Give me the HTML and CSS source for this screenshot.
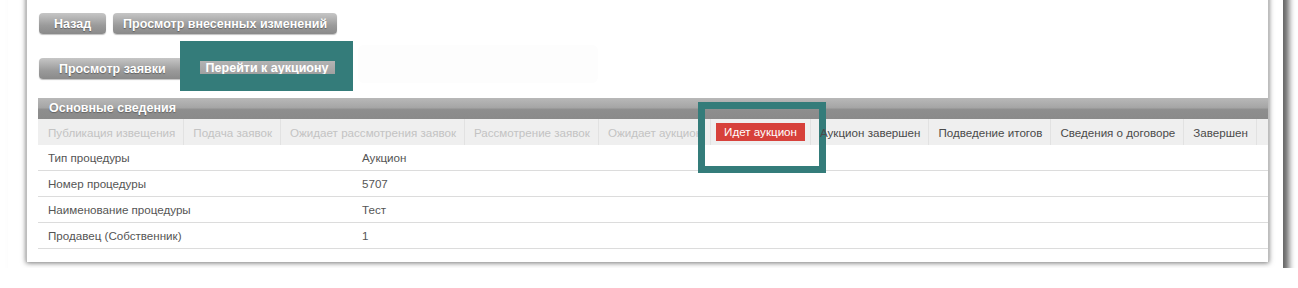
FILE: index.html
```html
<!DOCTYPE html>
<html lang="ru">
<head>
  <meta charset="UTF-8" />
  <title>Просмотр заявки</title>
  <link rel="stylesheet" href="styles.css">
</head>
<body>
  <div class="frame">
    <div class="panel">
      <div class="btn-row">
        <a class="btn btn-back">Назад</a>
        <a class="btn">Просмотр внесенных изменений</a>
      </div>

      <div class="tab-row">
        <a class="btn btn-tab">Просмотр заявки</a>
        <div class="mark-tab">
          <span class="mark-label">Перейти к аукциону</span>
        </div>
        <div class="ghost-box"></div>
      </div>

      <div class="section">
        <div class="section-title">Основные сведения</div>

        <div class="stages">
          <span class="stage done">Публикация извещения</span>
          <span class="stage done">Подача заявок</span>
          <span class="stage done">Ожидает рассмотрения заявок</span>
          <span class="stage done">Рассмотрение заявок</span>
          <span class="stage done">Ожидает аукцион</span>
          <span class="stage current">
            <span class="current-label">Идет аукцион</span>
            <span class="mark-box"></span>
          </span>
          <span class="stage">Аукцион завершен</span>
          <span class="stage">Подведение итогов</span>
          <span class="stage">Сведения о договоре</span>
          <span class="stage">Завершен</span>
        </div>

        <div class="info">
          <div class="info-row"><span>Тип процедуры</span><span>Аукцион</span></div>
          <div class="info-row"><span>Номер процедуры</span><span>5707</span></div>
          <div class="info-row"><span>Наименование процедуры</span><span>Тест</span></div>
          <div class="info-row"><span>Продавец (Собственник)</span><span>1</span></div>
        </div>
      </div>
    </div>
  </div>
</body>
</html>
```

FILE: styles.css
```css
body {
  margin: 0;
  background: #fff;
  font-family: "Liberation Sans", Arial, sans-serif;
  font-size: 11.6px;
  color: #555;
  overflow: hidden;
}
.frame {
  margin: -20px 0 0 8px;
  width: 1275px;
  height: 288px;
  background: #fff;
  box-shadow: 6px 6px 6px rgba(0, 0, 0, 0.6);
}
.panel {
  margin-left: 18px;
  width: 1243px;
  height: 282px;
  box-sizing: border-box;
  padding: 33px 0 0 11px;
  background: #fff;
  border-left: 1px solid #bdbdbd;
  border-right: 1px solid #bdbdbd;
  box-shadow: 0 1px 5px rgba(0, 0, 0, 0.55);
}

/* кнопки */
.btn-row {
  display: flex;
  gap: 7px;
  margin-left: 1px;
}
.btn {
  display: inline-flex;
  align-items: center;
  height: 21px;
  padding: 0 10px;
  border-radius: 4px;
  background: linear-gradient(#c6c6c6, #9a9a9a 60%, #8a8a8a);
  box-shadow: 0 1px 1px rgba(0, 0, 0, 0.25);
  color: #fff;
  font-weight: bold;
  font-size: 12.5px;
  text-shadow: 0 1px 1px rgba(0, 0, 0, 0.35);
  white-space: nowrap;
  cursor: pointer;
}
.btn-back {
  padding: 0 15px;
}
.btn-tab {
  padding: 0 20px;
  margin-top: 17px;
}
.tab-row {
  display: flex;
  align-items: flex-start;
  margin-top: 7px;
  margin-left: 1px;
}
.mark-tab {
  margin-left: -6px;
  width: 173px;
  height: 50px;
  box-sizing: border-box;
  padding: 20px 0 0 20px;
  background: #347c7a;
}
.mark-label {
  display: block;
  width: 135px;
  height: 13px;
  overflow: hidden;
  background: linear-gradient(#b4b4b4, #a0a0a0);
  color: #fff;
  font-weight: bold;
  font-size: 12.5px;
  line-height: 15px;
  text-indent: 6px;
  white-space: nowrap;
}
.ghost-box {
  margin: 4px 0 0 5px;
  width: 240px;
  height: 38px;
  border-radius: 6px;
  background: #fdfdfd;
}

/* основные сведения */
.section {
  margin-top: 7px;
}
.section-title {
  height: 21px;
  line-height: 21px;
  padding-left: 11px;
  background: linear-gradient(#b8b8b8, #a6a6a6 45%, #8e8e8e 55%, #8a8a8a);
  color: #fff;
  font-weight: bold;
  font-size: 12.5px;
  text-shadow: 0 1px 1px rgba(0, 0, 0, 0.3);
}
.stages {
  display: flex;
  align-items: center;
  height: 26px;
  background: #efefef;
}
.stage {
  position: relative;
  display: flex;
  align-items: center;
  height: 100%;
  padding: 0 8px 0 9px;
  border-right: 1px solid #e2e2e2;
  white-space: nowrap;
  color: #4a4a4a;
}
.stage:first-child {
  padding-left: 10px;
}
.stage.done {
  color: #c3c3c3;
}
.stage.current {
  padding: 0 5px;
}
.current-label {
  display: block;
  height: 18px;
  line-height: 18px;
  padding: 0 8px;
  background: #d7413b;
  color: #fff;
}
.mark-box {
  position: absolute;
  left: -13px;
  top: -17px;
  width: 128px;
  height: 71px;
  box-sizing: border-box;
  border: 7px solid #347c7a;
}
.info-row {
  display: grid;
  grid-template-columns: 314px 1fr;
  height: 25px;
  line-height: 25px;
  border-bottom: 1px solid #dcdcdc;
}
.info-row span {
  padding-left: 10px;
}
```
